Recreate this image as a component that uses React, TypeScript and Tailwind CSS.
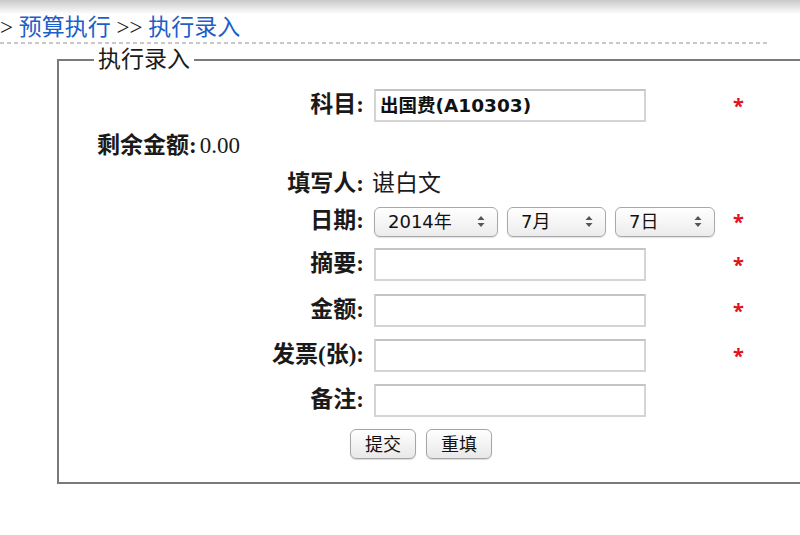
const serif = 'font-["Liberation_Serif","Noto_Sans_CJK_SC",serif]';
const sans = 'font-["DejaVu_Sans","Noto_Sans_CJK_SC",sans-serif]';

function Star() {
  return <span className="ml-[8px] text-[20px] font-bold leading-none text-[#e0121e]">*</span>;
}

function Label({ children }: { children: React.ReactNode }) {
  return (
    <div className={`w-[307px] shrink-0 pr-[2px] text-right text-[23px] font-bold text-[#1a1a1a] ${serif}`}>
      {children}
    </div>
  );
}

function TextInput({ value }: { value?: string }) {
  return (
    <div
      className={`flex h-[33px] w-[272px] items-center border-2 border-[#d4d4d4] border-t-[#c4c4c4] bg-white px-[4px] text-[18.5px] font-bold text-[#111] ${sans}`}
    >
      {value}
    </div>
  );
}

function Select({ value, width }: { value: string; width: string }) {
  return (
    <div
      className={`flex h-[30px] ${width} items-center justify-between rounded-[6px] border border-[#a9a9a9] bg-gradient-to-b from-white to-[#ececec] pl-[13px] pr-[12px] text-[18px] text-[#111] shadow-[0_1px_1px_rgba(0,0,0,0.12)] ${sans}`}
    >
      <span>{value}</span>
      <svg width="8" height="13" viewBox="0 0 8 13" className="text-[#555]">
        <path d="M4 1 L7.5 5 H0.5 Z M4 12 L7.5 8 H0.5 Z" fill="currentColor" />
      </svg>
    </div>
  );
}

function Button({ label }: { label: string }) {
  return (
    <div
      className={`flex h-[30px] w-[66px] items-center justify-center rounded-[6px] border border-[#a5a5a5] bg-gradient-to-b from-white to-[#e8e8e8] text-[18px] text-[#111] shadow-[0_1px_1px_rgba(0,0,0,0.15)] ${sans}`}
    >
      {label}
    </div>
  );
}

function FieldRow({ label, h, children, star }: { label: string; h: string; children: React.ReactNode; star?: boolean }) {
  return (
    <div className={`flex ${h} items-center`}>
      <Label>{label}</Label>
      <div className="ml-[8px] flex w-[351px] shrink-0 items-center">{children}</div>
      {star && <Star />}
    </div>
  );
}

export default function App() {
  return (
    <div className="h-[535px] w-[800px] overflow-hidden bg-white">
      <div className="h-[14px] bg-gradient-to-b from-[#c9c9c9] to-white" />

      {/* breadcrumb */}
      <div className={`flex h-[28px] items-center whitespace-nowrap text-[23px] ${serif}`}>
        <span className="text-[#111]">&gt;&nbsp;</span>
        <span className="text-[#1d5fc9]">预算执行</span>
        <span className="text-[#111]">&nbsp;&gt;&gt;&nbsp;</span>
        <span className="text-[#1d5fc9]">执行录入</span>
      </div>
      <div className="h-[2px] w-[770px] bg-[linear-gradient(to_right,#c8c8c8_4px,transparent_4px)] bg-[length:7px_2px]" />

      <fieldset className="ml-[57px] mt-[3px] w-[780px] border-2 border-[#7a7a7a] pb-[16px]">
        <legend className={`ml-[35px] px-[4px] text-[23px] leading-[26px] text-[#1a1a1a] ${serif}`}>执行录入</legend>

        <div className="pt-[12px]">
          <FieldRow label="科目:" h="h-[41px]" star>
            <TextInput value="出国费(A10303)" />
          </FieldRow>

          <div className={`flex h-[40px] items-center pl-[38px] text-[23px] text-[#1a1a1a] ${serif}`}>
            <span className="font-bold">剩余金额:</span>
            <span className="ml-[3px]">0.00</span>
          </div>

          <div className="flex h-[36px] items-center">
            <Label>填写人:</Label>
            <div className={`ml-[6px] text-[23px] text-[#1a1a1a] ${serif}`}>谌白文</div>
          </div>

          <FieldRow label="日期:" h="h-[39px]" star>
            <div className="flex gap-[9px]">
              <Select value="2014年" width="w-[124px]" />
              <Select value="7月" width="w-[99px]" />
              <Select value="7日" width="w-[100px]" />
            </div>
          </FieldRow>

          <FieldRow label="摘要:" h="h-[47px]" star>
            <TextInput />
          </FieldRow>
          <FieldRow label="金额:" h="h-[45px]" star>
            <TextInput />
          </FieldRow>
          <FieldRow label="发票(张):" h="h-[45px]" star>
            <TextInput />
          </FieldRow>
          <FieldRow label="备注:" h="h-[44px]">
            <TextInput />
          </FieldRow>

          <div className="flex h-[44px] items-center gap-[10px] pl-[291px]">
            <Button label="提交" />
            <Button label="重填" />
          </div>
        </div>
      </fieldset>
    </div>
  );
}
